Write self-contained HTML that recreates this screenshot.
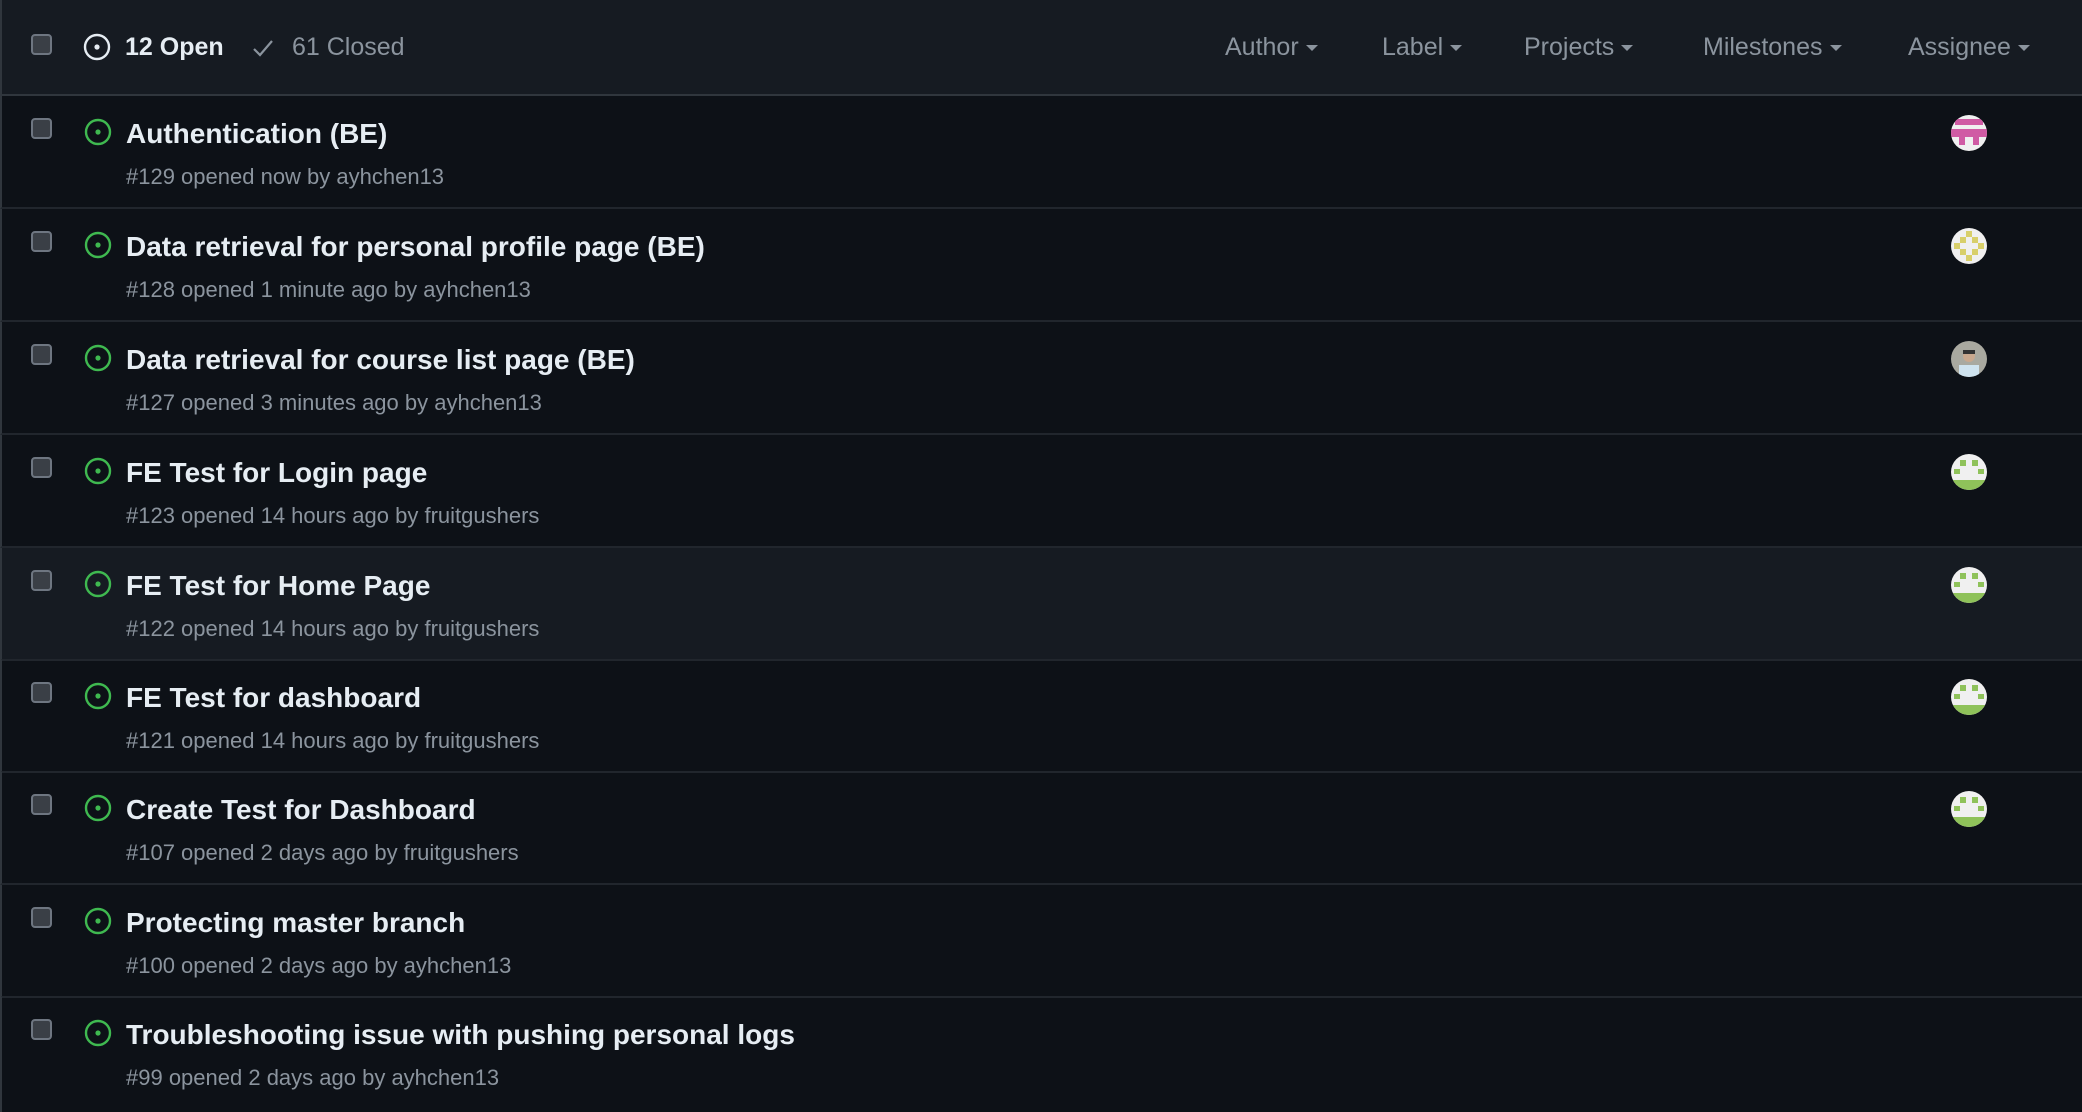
<!DOCTYPE html>
<html><head><meta charset="utf-8"><style>
*{box-sizing:border-box;margin:0;padding:0}
body{width:2082px;height:1112px;background:#0d1117;font-family:"Liberation Sans",sans-serif;overflow:hidden;position:relative}
.hdr{position:absolute;left:0;top:0;width:2082px;height:96px;background:#161b22;border-bottom:2px solid #30363d;border-left:2px solid #30363d}
.cb{position:absolute;width:21px;height:21px;border:2px solid #6e7681;border-radius:4px;background:#3a3f46}
.t{position:absolute;white-space:nowrap}
.row{position:absolute;left:0;width:2082px;height:113px;border-bottom:2px solid #21262d;border-left:2px solid #30363d}
.title{position:absolute;left:124px;top:22px;font-size:28px;font-weight:bold;color:#e6edf3;white-space:nowrap}
.meta{position:absolute;left:124px;top:68px;font-size:22px;color:#8b949e;white-space:nowrap}
.ic{position:absolute;left:82px;top:22px}
.flt{position:absolute;top:33px;font-size:25px;color:#8b949e}
.flt:after{content:"";display:inline-block;margin-left:7px;vertical-align:middle;border-left:6px solid transparent;border-right:6px solid transparent;border-top:6px solid #8b949e}
.av{position:absolute;left:1949px;top:19px;width:36px;height:36px;border-radius:50%;overflow:hidden;background:#f0f0f0}
</style></head><body>
<div class="hdr">
<div class="cb" style="left:29px;top:34px"></div>
<svg style="position:absolute;left:81px;top:33px" width="28" height="28" viewBox="0 0 28 28"><circle cx="14" cy="14" r="12" fill="none" stroke="#e6edf3" stroke-width="2.4"/><circle cx="14" cy="14" r="2.6" fill="#e6edf3"/></svg>
<div class="t" style="left:123px;top:33px;font-size:25px;font-weight:bold;color:#e6edf3">12 Open</div>
<svg style="position:absolute;left:249px;top:37px" width="24" height="22" viewBox="0 0 24 22"><path d="M3 12l6 6L21 4" fill="none" stroke="#8b949e" stroke-width="2.2"/></svg>
<div class="t" style="left:290px;top:33px;font-size:25px;color:#8b949e">61 Closed</div>
<div class="flt" style="left:1223px">Author</div>
<div class="flt" style="left:1380px">Label</div>
<div class="flt" style="left:1522px">Projects</div>
<div class="flt" style="left:1701px">Milestones</div>
<div class="flt" style="left:1906px">Assignee</div>
</div>

<div class="row" style="top:96px"><div class="cb" style="left:29px;top:22px"></div><svg class="ic" width="28" height="28" viewBox="0 0 28 28"><circle cx="14" cy="14" r="12" fill="none" stroke="#3fb950" stroke-width="2.4"/><circle cx="14" cy="14" r="2.6" fill="#3fb950"/></svg><div class="title">Authentication (BE)</div><div class="meta">#129 opened now by ayhchen13</div>
<div class="av"><svg width="36" height="36" viewBox="0 0 36 36"><rect x="4" y="4" width="28" height="6" fill="#d05ba4"/><rect x="0" y="14" width="36" height="8" fill="#d05ba4"/><rect x="8" y="22" width="6" height="8" fill="#d05ba4"/><rect x="22" y="22" width="6" height="8" fill="#d05ba4"/></svg></div></div>

<div class="row" style="top:209px"><div class="cb" style="left:29px;top:22px"></div><svg class="ic" width="28" height="28" viewBox="0 0 28 28"><circle cx="14" cy="14" r="12" fill="none" stroke="#3fb950" stroke-width="2.4"/><circle cx="14" cy="14" r="2.6" fill="#3fb950"/></svg><div class="title">Data retrieval for personal profile page (BE)</div><div class="meta">#128 opened 1 minute ago by ayhchen13</div>
<div class="av"><svg width="36" height="36" viewBox="0 0 36 36" fill="#d8cf6a"><rect x="15" y="3" width="6" height="6"/><rect x="9" y="9" width="6" height="6"/><rect x="21" y="9" width="6" height="6"/><rect x="3" y="15" width="6" height="6"/><rect x="27" y="15" width="6" height="6"/><rect x="9" y="21" width="6" height="6"/><rect x="21" y="21" width="6" height="6"/><rect x="15" y="27" width="6" height="6"/></svg></div></div>

<div class="row" style="top:322px"><div class="cb" style="left:29px;top:22px"></div><svg class="ic" width="28" height="28" viewBox="0 0 28 28"><circle cx="14" cy="14" r="12" fill="none" stroke="#3fb950" stroke-width="2.4"/><circle cx="14" cy="14" r="2.6" fill="#3fb950"/></svg><div class="title">Data retrieval for course list page (BE)</div><div class="meta">#127 opened 3 minutes ago by ayhchen13</div>
<div class="av" style="background:#a9a9a0"><svg width="36" height="36" viewBox="0 0 36 36"><circle cx="18" cy="15" r="6" fill="#c9a88e"/><rect x="12" y="9" width="12" height="4" fill="#333"/><rect x="8" y="24" width="20" height="12" fill="#cfe3ef"/></svg></div></div>

<div class="row" style="top:435px"><div class="cb" style="left:29px;top:22px"></div><svg class="ic" width="28" height="28" viewBox="0 0 28 28"><circle cx="14" cy="14" r="12" fill="none" stroke="#3fb950" stroke-width="2.4"/><circle cx="14" cy="14" r="2.6" fill="#3fb950"/></svg><div class="title">FE Test for Login page</div><div class="meta">#123 opened 14 hours ago by fruitgushers</div>
<div class="av"><svg width="36" height="36" viewBox="0 0 36 36" fill="#8fc25a"><rect x="9" y="6" width="6" height="6"/><rect x="21" y="6" width="6" height="6"/><rect x="3" y="15" width="6" height="5"/><rect x="27" y="15" width="6" height="5"/><rect x="0" y="26" width="36" height="10"/></svg></div></div>

<div class="row" style="top:548px;background:#161b22"><div class="cb" style="left:29px;top:22px"></div><svg class="ic" width="28" height="28" viewBox="0 0 28 28"><circle cx="14" cy="14" r="12" fill="none" stroke="#3fb950" stroke-width="2.4"/><circle cx="14" cy="14" r="2.6" fill="#3fb950"/></svg><div class="title">FE Test for Home Page</div><div class="meta">#122 opened 14 hours ago by fruitgushers</div>
<div class="av"><svg width="36" height="36" viewBox="0 0 36 36" fill="#8fc25a"><rect x="9" y="6" width="6" height="6"/><rect x="21" y="6" width="6" height="6"/><rect x="3" y="15" width="6" height="5"/><rect x="27" y="15" width="6" height="5"/><rect x="0" y="26" width="36" height="10"/></svg></div></div>

<div class="row" style="top:660px"><div class="cb" style="left:29px;top:22px"></div><svg class="ic" width="28" height="28" viewBox="0 0 28 28"><circle cx="14" cy="14" r="12" fill="none" stroke="#3fb950" stroke-width="2.4"/><circle cx="14" cy="14" r="2.6" fill="#3fb950"/></svg><div class="title">FE Test for dashboard</div><div class="meta">#121 opened 14 hours ago by fruitgushers</div>
<div class="av"><svg width="36" height="36" viewBox="0 0 36 36" fill="#8fc25a"><rect x="9" y="6" width="6" height="6"/><rect x="21" y="6" width="6" height="6"/><rect x="3" y="15" width="6" height="5"/><rect x="27" y="15" width="6" height="5"/><rect x="0" y="26" width="36" height="10"/></svg></div></div>

<div class="row" style="top:772px"><div class="cb" style="left:29px;top:22px"></div><svg class="ic" width="28" height="28" viewBox="0 0 28 28"><circle cx="14" cy="14" r="12" fill="none" stroke="#3fb950" stroke-width="2.4"/><circle cx="14" cy="14" r="2.6" fill="#3fb950"/></svg><div class="title">Create Test for Dashboard</div><div class="meta">#107 opened 2 days ago by fruitgushers</div>
<div class="av"><svg width="36" height="36" viewBox="0 0 36 36" fill="#8fc25a"><rect x="9" y="6" width="6" height="6"/><rect x="21" y="6" width="6" height="6"/><rect x="3" y="15" width="6" height="5"/><rect x="27" y="15" width="6" height="5"/><rect x="0" y="26" width="36" height="10"/></svg></div></div>

<div class="row" style="top:885px"><div class="cb" style="left:29px;top:22px"></div><svg class="ic" width="28" height="28" viewBox="0 0 28 28"><circle cx="14" cy="14" r="12" fill="none" stroke="#3fb950" stroke-width="2.4"/><circle cx="14" cy="14" r="2.6" fill="#3fb950"/></svg><div class="title">Protecting master branch</div><div class="meta">#100 opened 2 days ago by ayhchen13</div></div>

<div class="row" style="top:997px;height:115px;border-bottom:none"><div class="cb" style="left:29px;top:22px"></div><svg class="ic" width="28" height="28" viewBox="0 0 28 28"><circle cx="14" cy="14" r="12" fill="none" stroke="#3fb950" stroke-width="2.4"/><circle cx="14" cy="14" r="2.6" fill="#3fb950"/></svg><div class="title">Troubleshooting issue with pushing personal logs</div><div class="meta">#99 opened 2 days ago by ayhchen13</div></div>
</body></html>
